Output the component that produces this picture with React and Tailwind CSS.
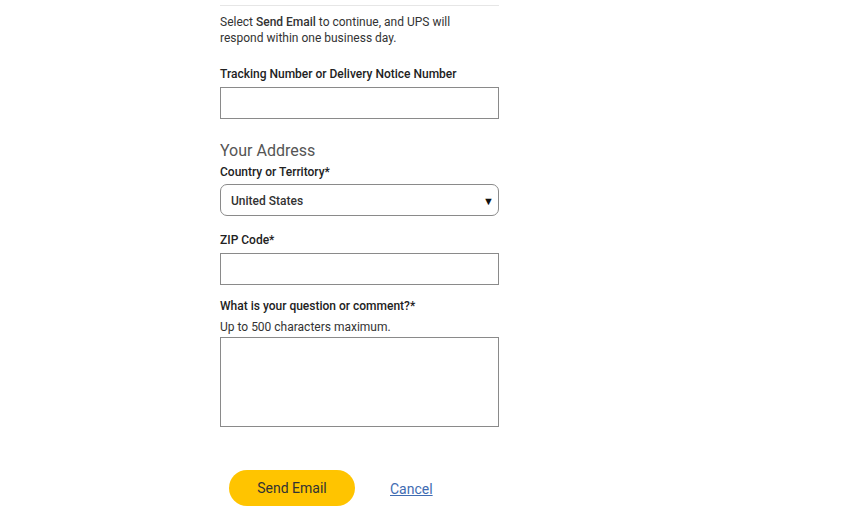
export default function App() {
  const font = { fontFamily: 'Roboto, "Liberation Sans", Arial, sans-serif' };
  return (
    <div className="w-[844px] h-[522px] bg-white overflow-hidden" style={font}>
      <div className="ml-[220px] w-[279px] pt-[5px] text-[#333]">
        <div className="h-px bg-[#e6e6e6]" />
        <p className="mt-[8px] text-[12px] leading-[16px] text-[#333]">
          Select <span className="font-medium">Send Email</span> to continue, and UPS will
          <br />
          respond within one business day.
        </p>
        <label className="block mt-[20px] text-[12px] leading-[16px] font-medium text-[#222]">
          Tracking Number or Delivery Notice Number
        </label>
        <input className="block mt-[5px] w-[279px] h-[32px] border border-[#8a8a8a] outline-none" />

        <h2 className="mt-[22px] text-[16px] leading-[20px] text-[#555]">Your Address</h2>
        <label className="block mt-[3px] text-[12px] leading-[16px] font-medium text-[#222]">
          Country or Territory*
        </label>
        <div className="mt-[4px] w-[279px] h-[32px] border border-[#8a8a8a] rounded-[7px] flex items-center justify-between pl-[10px] pr-[4px] pt-[2px]">
          <span className="text-[12px] font-medium text-[#333]">United States</span>
          <span className="text-[11px] text-[#111] leading-none">▼</span>
        </div>

        <label className="block mt-[16px] text-[12px] leading-[16px] font-medium text-[#222]">
          ZIP Code*
        </label>
        <input className="block mt-[5px] w-[279px] h-[32px] border border-[#8a8a8a] outline-none" />

        <label className="block mt-[13px] text-[12px] leading-[16px] font-medium text-[#222]">
          What is your question or comment?*
        </label>
        <p className="mt-[5px] text-[12px] leading-[16px] text-[#333]">Up to 500 characters maximum.</p>
        <textarea className="block mt-[2px] w-[279px] h-[90px] border border-[#8a8a8a] outline-none resize-none" />

        <div className="mt-[43px] flex items-center">
          <button className="ml-[9px] w-[126px] h-[36px] rounded-full bg-[#ffc400] text-[14px] text-[#333]">
            Send Email
          </button>
          <a href="#" className="ml-[35px] mt-[2px] text-[14px] text-[#3f6cb2] underline">
            Cancel
          </a>
        </div>
      </div>
    </div>
  );
}
